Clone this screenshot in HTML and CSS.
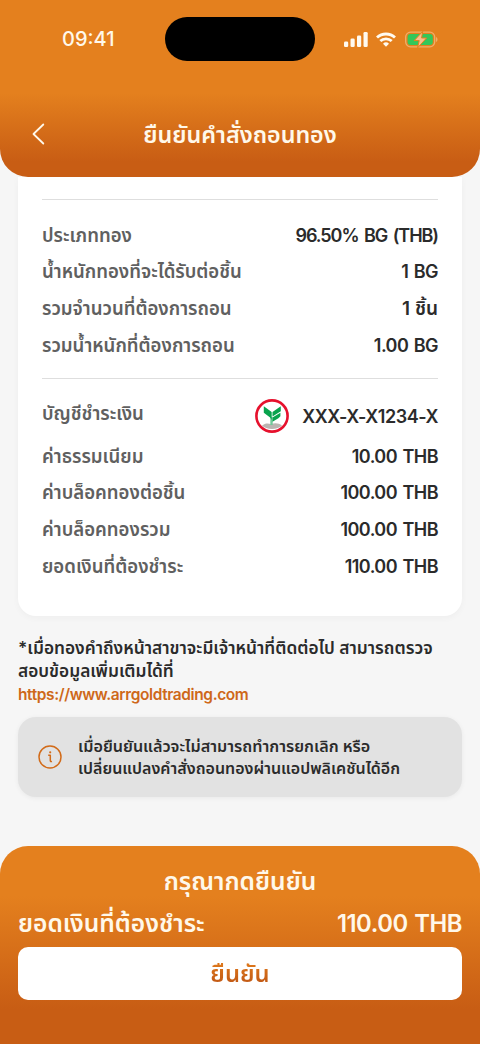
FILE: index.html
```html
<!DOCTYPE html>
<html lang="th">
<head>
<meta charset="utf-8">
<title>ยืนยันคำสั่งถอนทอง</title>
<link rel="stylesheet" href="styles.css">
</head>
<body>
<div class="screen">
  <header class="header">
    <div class="status">
      <span class="time">09:41</span>
      <span class="island"></span>
      <span class="indicators">
        <svg class="signal" width="25" height="16" viewBox="0 0 25 16" fill="#fffaf0"><rect x="0" y="9.5" width="4.2" height="5.5" rx="1.3"/><rect x="6.5" y="6.5" width="4.2" height="8.5" rx="1.3"/><rect x="13" y="3.5" width="4.2" height="11.5" rx="1.3"/><rect x="19.5" y="0" width="4.2" height="15" rx="1.3"/></svg>
        <svg class="wifi" width="20" height="16" viewBox="0 0 20 16" fill="none" stroke="#fffaf0" stroke-width="2.8"><path d="M1 5.6a13 13 0 0 1 18 0M4.3 9.1a8.2 8.2 0 0 1 11.4 0"/><path d="M10 14.8l-3-3a4.3 4.3 0 0 1 6 0z" fill="#fffaf0" stroke="none"/></svg>
        <svg class="battery" width="33" height="17" viewBox="0 0 33 17"><rect x=".7" y="1.2" width="29" height="14.6" rx="4.8" fill="none" stroke="#f0ae69" stroke-width="1.3"/><rect x="2.6" y="3.1" width="25.2" height="10.8" rx="3" fill="#34c759"/><path d="M31 6v5c2-.7 2-4.300 0-5z" fill="#f0ae69"/><path d="M17.700.4L9.200 9.600h5L12.600 16.800l9-9.800h-5z" fill="#f8c08c" stroke="#e4801e" stroke-width="1"/></svg>
      </span>
    </div>
    <div class="titlebar">
      <svg class="back" width="14" height="22" viewBox="0 0 14 22" fill="none" stroke="#fff8ea" stroke-width="1.8" stroke-linecap="round" stroke-linejoin="round"><path d="M11.300 1.500L1.500 11l9.800 9.500"/></svg>
      <h1 class="title">ยืนยันคำสั่งถอนทอง</h1>
    </div>
  </header>
  <main class="content">
    <section class="card">
      <div class="group">
        <div class="row"><span class="label">ประเภททอง</span><span class="value product">96.50% BG (THB)</span></div>
        <div class="row"><span class="label">น้ำหนักทองที่จะได้รับต่อชิ้น</span><span class="value">1 BG</span></div>
        <div class="row"><span class="label">รวมจำนวนที่ต้องการถอน</span><span class="value pieces">1 ชิ้น</span></div>
        <div class="row"><span class="label">รวมน้ำหนักที่ต้องการถอน</span><span class="value">1.00 BG</span></div>
      </div>
      <div class="group">
        <div class="row account"><span class="label">บัญชีชำระเงิน</span><span class="value bank">
          <svg width="34" height="34" viewBox="0 0 34 34"><circle cx="17" cy="17" r="15.600" fill="#fff" stroke="#e6112d" stroke-width="2.600"/><path d="M7 26.500c3-2.500 6-2.500 9-1.500 4-1.500 8-1 11 1.500-2 2-6 3.500-10 3.500S9 28.500 7 26.500z" fill="#bbb5b2"/><path d="M15.300 18v8h2.400v-8z" fill="#72c99b"/><path d="M8.800 7.300l7.900 5.700v8l-1.600-2.500-6.300-4.700z" fill="#08a34d"/><path d="M25.800 7.300v5l-8.300 5.200V13zM25.400 13.800v3.500l-2 2-5.900 3.500v-4.300z" fill="#08a34d"/></svg>
          <span>XXX-X-X1234-X</span></span></div>
        <div class="row"><span class="label">ค่าธรรมเนียม</span><span class="value">10.00 THB</span></div>
        <div class="row"><span class="label">ค่าบล็อคทองต่อชิ้น</span><span class="value">100.00 THB</span></div>
        <div class="row"><span class="label">ค่าบล็อคทองรวม</span><span class="value">100.00 THB</span></div>
        <div class="row"><span class="label">ยอดเงินที่ต้องชำระ</span><span class="value">110.00 THB</span></div>
      </div>
    </section>
    <div class="note">
      <div>*เมื่อทองคำถึงหน้าสาขาจะมีเจ้าหน้าที่ติดต่อไป สามารถตรวจ</div>
      <div>สอบข้อมูลเพิ่มเติมได้ที่</div>
      <a class="link">https://www.arrgoldtrading.com</a>
    </div>
    <aside class="notice">
      <svg width="24" height="24" viewBox="0 0 24 24" fill="none" stroke="#d26b19" stroke-width="1.500"><circle cx="12" cy="12" r="11"/><path d="M10.200 10.300h2.100v5.200c0 1 .6 1.300 1.700 1" stroke-linejoin="round"/><circle cx="12.200" cy="7.300" r="1.100" fill="#d26b19" stroke="none"/></svg>
      <div class="notice-text"><div class="lead">เมื่อยืนยันแล้วจะไม่สามารถทำการยกเลิก หรือ</div><div>เปลี่ยนแปลงคำสั่งถอนทองผ่านแอปพลิเคชันได้อีก</div></div>
    </aside>
  </main>
  <footer class="footer">
    <div class="prompt">กรุณากดยืนยัน</div>
    <div class="total"><span>ยอดเงินที่ต้องชำระ</span><span class="amount">110.00 THB</span></div>
    <button class="confirm"><span>ยืนยัน</span></button>
  </footer>
</div>
</body>
</html>
```
FILE: styles.css
```css
* { box-sizing: border-box; }
body { margin: 0; background: #f6f6f6; color: #2b2b2b; font-family: Inter, "Noto Sans Thai", "Noto Sans Thai UI", sans-serif; }
.screen { width: 480px; height: 1044px; display: flex; flex-direction: column; overflow: hidden; }
.header { height: 177px; flex: none; border-radius: 0 0 28px 28px; background: linear-gradient(#e4801e 0, #e4801e 93px, #c85d14 162px, #c85d14 100%); color: #fff8ea; z-index: 1; }
.status { height: 77px; display: grid; grid-template-columns: 165px 150px 165px; align-items: center; }
.time { padding: 1px 0 0 62px; font-size: 20px; font-weight: 550; }
.island { height: 44px; border-radius: 22px; background: #000; }
.indicators { display: flex; align-items: center; padding: 1px 0 0 29px; gap: 7px; }
.signal, .wifi { margin-top: 1px; }
.battery { margin-left: 2px; }
.titlebar { height: 100px; display: grid; grid-template-columns: 80px 320px 80px; align-items: center; }
.back { margin: 13px 0 0 32px; }
.title { margin: 15px 0 0; font-size: 23.300px; font-weight: 650; text-align: center; line-height: 30px; white-space: nowrap; }
.content { flex: 1; padding: 0 18px; }
.card { height: 439px; padding: 21.500px 24px 0; background: #fff; border-radius: 0 0 18px 18px; box-shadow: 0 2px 7px rgba(0,0,0,.035); }
.group { height: 179px; border-top: 1.500px solid #dedede; padding-top: 18px; }
.row { height: 36.670px; display: flex; justify-content: space-between; align-items: center; white-space: nowrap; line-height: 30px; }
.label { padding-bottom: 2px; font-size: 18.600px; font-weight: 560; color: #606060; }
.value { font-size: 18px; font-weight: 600; letter-spacing: -.55px; word-spacing: 1.500px; }
.product { letter-spacing: -1.050px; word-spacing: 2px; }
.pieces { font-size: 19px; letter-spacing: 0; word-spacing: 0; }
.account { height: 42px; }
.account .label { padding-bottom: 9px; }
.bank { display: flex; align-items: center; gap: 13px; letter-spacing: -.45px; padding-bottom: 2px; }
.bank svg { margin-bottom: 2px; }
.note { padding-top: 20px; font-size: 17.300px; font-weight: 600; line-height: 23.250px; white-space: nowrap; }
.link { color: #ce681a; display: block; font-size: 15.500px; line-height: 23px; letter-spacing: -.4px; }
.notice { height: 80px; margin-top: 11.500px; padding-left: 20px; display: flex; align-items: center; gap: 16px; border-radius: 18px; background: #e2e2e2; box-shadow: 0 1px 5px rgba(0,0,0,.06); font-size: 16px; font-weight: 600; line-height: 22px; white-space: nowrap; }
.notice-text { margin-top: -1px; }
.lead { font-size: 16.150px; }
.footer { height: 198px; flex: none; padding: 19px 18px 0; border-radius: 28px 28px 0 0; background: linear-gradient(#e4801e 0, #e4801e 50px, #c85d14 163px, #c85d14 100%); color: #fff8ea; font-size: 24.600px; font-weight: 600; white-space: nowrap; }
.prompt { height: 37px; line-height: 32px; text-align: center; }
.total { height: 45px; display: flex; justify-content: space-between; line-height: 42px; }
.amount { font-size: 23.800px; letter-spacing: -.45px; word-spacing: 1px; line-height: 43px; }
.confirm { display: block; width: 100%; height: 53px; border: 0; border-radius: 10px; background: #fff; font: inherit; font-size: 23.800px; padding: 3px 0 0; }
.confirm span { background: linear-gradient(#dc761b 20%, #c35a15 80%); background-clip: text; -webkit-background-clip: text; color: transparent; }
```
